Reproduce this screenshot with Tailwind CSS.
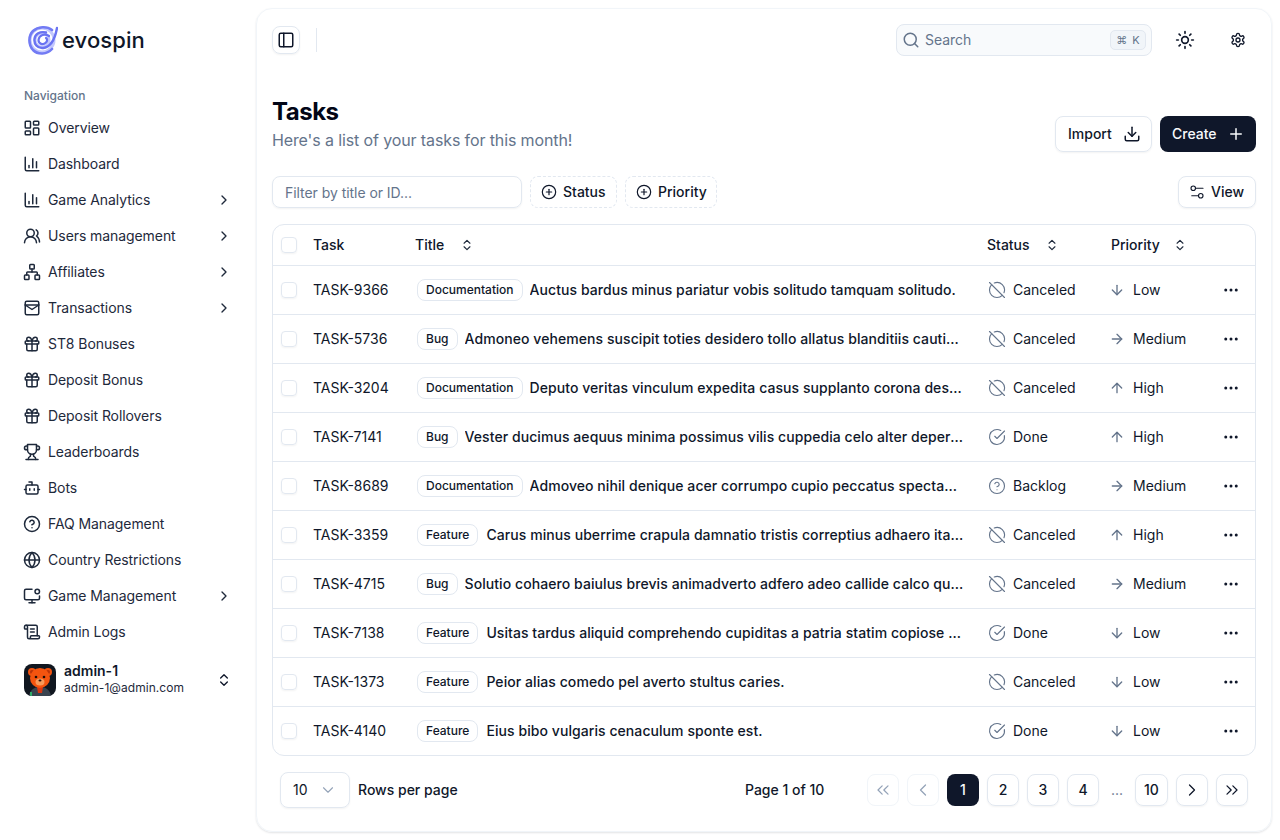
<!DOCTYPE html>
<html lang="en">
<head>
<meta charset="utf-8">
<title>Tasks</title>
<script src="https://cdn.jsdelivr.net/npm/@tailwindcss/browser@4"></script>
</head>
<body class="bg-white text-[#0f172a] font-['Inter','Liberation_Sans',sans-serif] antialiased">
<svg class="hidden" xmlns="http://www.w3.org/2000/svg">
<symbol id="i-dash" viewBox="0 0 24 24"><rect x="3" y="3" width="7" height="9" rx="1"/><rect x="14" y="3" width="7" height="5" rx="1"/><rect x="14" y="12" width="7" height="9" rx="1"/><rect x="3" y="16" width="7" height="5" rx="1"/></symbol>
<symbol id="i-chart" viewBox="0 0 24 24"><path d="M3 3v16a2 2 0 0 0 2 2h16"/><path d="M18 17V9"/><path d="M13 17V5"/><path d="M8 17v-3"/></symbol>
<symbol id="i-users" viewBox="0 0 24 24"><path d="M18 21a8 8 0 0 0-16 0"/><circle cx="10" cy="8" r="5"/><path d="M22 20c0-3.37-2-6.5-4-8a5 5 0 0 0-.45-8.3"/></symbol>
<symbol id="i-net" viewBox="0 0 24 24"><rect x="16" y="16" width="6" height="6" rx="1"/><rect x="2" y="16" width="6" height="6" rx="1"/><rect x="9" y="2" width="6" height="6" rx="1"/><path d="M5 16v-3a1 1 0 0 1 1-1h12a1 1 0 0 1 1 1v3"/><path d="M12 12V8"/></symbol>
<symbol id="i-box" viewBox="0 0 24 24"><rect x="3" y="3" width="18" height="18" rx="2"/><path d="M3 8h18"/><path d="M3 8l9 6 9-6"/></symbol>
<symbol id="i-gift" viewBox="0 0 24 24"><rect x="3" y="8" width="18" height="4" rx="1"/><path d="M12 8v13"/><path d="M19 12v7a2 2 0 0 1-2 2H7a2 2 0 0 1-2-2v-7"/><path d="M7.5 8a2.5 2.5 0 0 1 0-5A4.8 8 0 0 1 12 8a4.8 8 0 0 1 4.5-5 2.5 2.5 0 0 1 0 5"/></symbol>
<symbol id="i-trophy" viewBox="0 0 24 24"><path d="M6 9H4.5a2.5 2.5 0 0 1 0-5H6"/><path d="M18 9h1.5a2.5 2.5 0 0 0 0-5H18"/><path d="M4 22h16"/><path d="M10 14.66V17c0 .55-.47.98-.97 1.21C7.85 18.75 7 20.24 7 22"/><path d="M14 14.66V17c0 .55.47.98.97 1.21C16.15 18.75 17 20.24 17 22"/><path d="M18 2H6v7a6 6 0 0 0 12 0V2Z"/></symbol>
<symbol id="i-bot" viewBox="0 0 24 24"><path d="M12 8V4H8"/><rect x="4" y="8" width="16" height="12" rx="2"/><path d="M2 14h2"/><path d="M20 14h2"/><path d="M15 13v2"/><path d="M9 13v2"/></symbol>
<symbol id="i-help" viewBox="0 0 24 24"><circle cx="12" cy="12" r="10"/><path d="M9.09 9a3 3 0 0 1 5.83 1c0 2-3 3-3 3"/><path d="M12 17h.01"/></symbol>
<symbol id="i-globe" viewBox="0 0 24 24"><circle cx="12" cy="12" r="10"/><path d="M12 2a14.5 14.5 0 0 0 0 20 14.5 14.5 0 0 0 0-20"/><path d="M2 12h20"/></symbol>
<symbol id="i-monitor" viewBox="0 0 24 24"><path d="M12 3H4a2 2 0 0 0-2 2v10a2 2 0 0 0 2 2h16a2 2 0 0 0 2-2v-3"/><path d="M8 21h8"/><path d="M12 17v4"/><circle cx="19" cy="6" r="3"/></symbol>
<symbol id="i-scroll" viewBox="0 0 24 24"><path d="M15 12h-5"/><path d="M15 8h-5"/><path d="M19 17V5a2 2 0 0 0-2-2H4"/><path d="M8 21h12a2 2 0 0 0 2-2v-1a1 1 0 0 0-1-1H11a1 1 0 0 0-1 1v1a2 2 0 1 1-4 0V5a2 2 0 1 0-4 0v2a1 1 0 0 0 1 1h3"/></symbol>
<symbol id="i-updown" viewBox="0 0 24 24"><path d="m7 15 5 5 5-5"/><path d="m7 9 5-5 5 5"/></symbol>
<symbol id="i-panel" viewBox="0 0 24 24"><rect x="3" y="3" width="18" height="18" rx="2"/><path d="M9 3v18"/></symbol>
<symbol id="i-search" viewBox="0 0 24 24"><path d="m21 21-4.3-4.3"/><circle cx="11" cy="11" r="8"/></symbol>
<symbol id="i-sun" viewBox="0 0 24 24"><circle cx="12" cy="12" r="4"/><path d="M12 2v2"/><path d="M12 20v2"/><path d="m4.93 4.93 1.41 1.41"/><path d="m17.66 17.66 1.41 1.41"/><path d="M2 12h2"/><path d="M20 12h2"/><path d="m6.34 17.66-1.41 1.41"/><path d="m19.07 4.93-1.41 1.41"/></symbol>
<symbol id="i-gear" viewBox="0 0 24 24"><path d="M12.22 2h-.44a2 2 0 0 0-2 2v.18a2 2 0 0 1-1 1.73l-.43.25a2 2 0 0 1-2 0l-.15-.08a2 2 0 0 0-2.73.73l-.22.38a2 2 0 0 0 .73 2.73l.15.1a2 2 0 0 1 1 1.72v.51a2 2 0 0 1-1 1.74l-.15.09a2 2 0 0 0-.73 2.73l.22.38a2 2 0 0 0 2.73.73l.15-.08a2 2 0 0 1 2 0l.43.25a2 2 0 0 1 1 1.73V20a2 2 0 0 0 2 2h.44a2 2 0 0 0 2-2v-.18a2 2 0 0 1 1-1.73l.43-.25a2 2 0 0 1 2 0l.15.08a2 2 0 0 0 2.73-.73l.22-.39a2 2 0 0 0-.73-2.73l-.15-.08a2 2 0 0 1-1-1.74v-.5a2 2 0 0 1 1-1.74l.15-.09a2 2 0 0 0 .73-2.73l-.22-.38a2 2 0 0 0-2.73-.73l-.15.08a2 2 0 0 1-2 0l-.43-.25a2 2 0 0 1-1-1.73V4a2 2 0 0 0-2-2z"/><circle cx="12" cy="12" r="3"/></symbol>
<symbol id="i-import" viewBox="0 0 24 24"><path d="M12 15V3"/><path d="M21 15v4a2 2 0 0 1-2 2H5a2 2 0 0 1-2-2v-4"/><path d="m7 10 5 5 5-5"/></symbol>
<symbol id="i-plus" viewBox="0 0 24 24"><path d="M5 12h14"/><path d="M12 5v14"/></symbol>
<symbol id="i-sliders" viewBox="0 0 24 24"><path d="M20 7h-9"/><path d="M14 17H5"/><circle cx="17" cy="17" r="3"/><circle cx="7" cy="7" r="3"/></symbol>
<symbol id="i-cplus" viewBox="0 0 24 24"><circle cx="12" cy="12" r="10"/><path d="M8 12h8"/><path d="M12 8v8"/></symbol>
<symbol id="i-off" viewBox="0 0 24 24"><path d="m2 2 20 20"/><path d="M8.35 2.69A10 10 0 0 1 21.3 15.65"/><path d="M19.08 19.08A10 10 0 1 1 4.92 4.92"/></symbol>
<symbol id="i-check" viewBox="0 0 24 24"><path d="M21.801 10A10 10 0 1 1 17 3.335"/><path d="m9 11 3 3L22 4"/></symbol>
<symbol id="i-down" viewBox="0 0 24 24"><path d="M12 5v14"/><path d="m19 12-7 7-7-7"/></symbol>
<symbol id="i-up" viewBox="0 0 24 24"><path d="m5 12 7-7 7 7"/><path d="M12 19V5"/></symbol>
<symbol id="i-right" viewBox="0 0 24 24"><path d="M5 12h14"/><path d="m12 5 7 7-7 7"/></symbol>
<symbol id="i-dots" viewBox="0 0 24 24"><circle cx="12" cy="12" r="1"/><circle cx="19" cy="12" r="1"/><circle cx="5" cy="12" r="1"/></symbol>
<symbol id="i-cr" viewBox="0 0 24 24"><path d="m9 18 6-6-6-6"/></symbol>
<symbol id="i-cl" viewBox="0 0 24 24"><path d="m15 18-6-6 6-6"/></symbol>
<symbol id="i-cd" viewBox="0 0 24 24"><path d="m6 9 6 6 6-6"/></symbol>
<symbol id="i-cll" viewBox="0 0 24 24"><path d="m11 17-5-5 5-5"/><path d="m18 17-5-5 5-5"/></symbol>
<symbol id="i-crr" viewBox="0 0 24 24"><path d="m6 17 5-5-5-5"/><path d="m13 17 5-5-5-5"/></symbol>
</svg>

<div class="flex h-[840px] w-[1280px] overflow-hidden">
  <!-- Sidebar -->
  <aside class="w-64 shrink-0 flex flex-col">
    <div class="h-[80px] pl-7 flex items-center gap-1">
      <svg class="w-[30px] h-[30px]" viewBox="0 0 30 30" fill="none" stroke-linecap="round">
        <circle cx="14" cy="15" r="12" stroke="#c3c8fd" stroke-width="3"/>
        <circle cx="14" cy="15" r="7" stroke="#c3c8fd" stroke-width="3"/>
        <path d="M24 5C19 1 10 1.500 5 6 0 11 .500 20 5 25 10 30 19 29.500 24 24" stroke="#727bf4" stroke-width="2.600"/>
        <path d="M29 3C27 14 23 22 15 23 9 23.500 6 19 6.500 14 7 9 12 6 18 7.500" stroke="#6a73f2" stroke-width="2.400"/>
        <path d="M21 11C17 8 11 10 10.500 15 10.500 19 15 20.500 18 17.500 19.500 16 19.500 14 18 13" stroke="#6a73f2" stroke-width="2.200"/>
      </svg>
      <span class="text-[22px] leading-none font-medium tracking-[0.1px] text-[#0f1729] -mt-px">evospin</span>
    </div>
    <div class="pl-6 pr-6 mt-2 h-4 flex items-center text-xs font-medium text-[#64748b]">Navigation</div>
    <nav class="mt-[6px] flex flex-col text-sm tracking-[-0.08px] text-[#1e293b]">
      <a class="h-9 pl-6 pr-6 flex items-center gap-[7px]"><svg class="-ml-px size-[18px] shrink-0 fill-none stroke-current stroke-2 [stroke-linecap:round] [stroke-linejoin:round]"><use href="#i-dash"/></svg><span class="flex-1">Overview</span></a>
      <a class="h-9 pl-6 pr-6 flex items-center gap-[7px]"><svg class="-ml-px size-[18px] shrink-0 fill-none stroke-current stroke-2 [stroke-linecap:round] [stroke-linejoin:round]"><use href="#i-chart"/></svg><span class="flex-1">Dashboard</span></a>
      <a class="h-9 pl-6 pr-6 flex items-center gap-[7px]"><svg class="-ml-px size-[18px] shrink-0 fill-none stroke-current stroke-2 [stroke-linecap:round] [stroke-linejoin:round]"><use href="#i-chart"/></svg><span class="flex-1">Game Analytics</span><svg class="size-4 shrink-0 fill-none stroke-current stroke-2 [stroke-linecap:round] [stroke-linejoin:round]"><use href="#i-cr"/></svg></a>
      <a class="h-9 pl-6 pr-6 flex items-center gap-[7px]"><svg class="-ml-px size-[18px] shrink-0 fill-none stroke-current stroke-2 [stroke-linecap:round] [stroke-linejoin:round]"><use href="#i-users"/></svg><span class="flex-1">Users management</span><svg class="size-4 shrink-0 fill-none stroke-current stroke-2 [stroke-linecap:round] [stroke-linejoin:round]"><use href="#i-cr"/></svg></a>
      <a class="h-9 pl-6 pr-6 flex items-center gap-[7px]"><svg class="-ml-px size-[18px] shrink-0 fill-none stroke-current stroke-2 [stroke-linecap:round] [stroke-linejoin:round]"><use href="#i-net"/></svg><span class="flex-1">Affiliates</span><svg class="size-4 shrink-0 fill-none stroke-current stroke-2 [stroke-linecap:round] [stroke-linejoin:round]"><use href="#i-cr"/></svg></a>
      <a class="h-9 pl-6 pr-6 flex items-center gap-[7px]"><svg class="-ml-px size-[18px] shrink-0 fill-none stroke-current stroke-2 [stroke-linecap:round] [stroke-linejoin:round]"><use href="#i-box"/></svg><span class="flex-1">Transactions</span><svg class="size-4 shrink-0 fill-none stroke-current stroke-2 [stroke-linecap:round] [stroke-linejoin:round]"><use href="#i-cr"/></svg></a>
      <a class="h-9 pl-6 pr-6 flex items-center gap-[7px]"><svg class="-ml-px size-[18px] shrink-0 fill-none stroke-current stroke-2 [stroke-linecap:round] [stroke-linejoin:round]"><use href="#i-gift"/></svg><span class="flex-1">ST8 Bonuses</span></a>
      <a class="h-9 pl-6 pr-6 flex items-center gap-[7px]"><svg class="-ml-px size-[18px] shrink-0 fill-none stroke-current stroke-2 [stroke-linecap:round] [stroke-linejoin:round]"><use href="#i-gift"/></svg><span class="flex-1">Deposit Bonus</span></a>
      <a class="h-9 pl-6 pr-6 flex items-center gap-[7px]"><svg class="-ml-px size-[18px] shrink-0 fill-none stroke-current stroke-2 [stroke-linecap:round] [stroke-linejoin:round]"><use href="#i-gift"/></svg><span class="flex-1">Deposit Rollovers</span></a>
      <a class="h-9 pl-6 pr-6 flex items-center gap-[7px]"><svg class="-ml-px size-[18px] shrink-0 fill-none stroke-current stroke-2 [stroke-linecap:round] [stroke-linejoin:round]"><use href="#i-trophy"/></svg><span class="flex-1">Leaderboards</span></a>
      <a class="h-9 pl-6 pr-6 flex items-center gap-[7px]"><svg class="-ml-px size-[18px] shrink-0 fill-none stroke-current stroke-2 [stroke-linecap:round] [stroke-linejoin:round]"><use href="#i-bot"/></svg><span class="flex-1">Bots</span></a>
      <a class="h-9 pl-6 pr-6 flex items-center gap-[7px]"><svg class="-ml-px size-[18px] shrink-0 fill-none stroke-current stroke-2 [stroke-linecap:round] [stroke-linejoin:round]"><use href="#i-help"/></svg><span class="flex-1">FAQ Management</span></a>
      <a class="h-9 pl-6 pr-6 flex items-center gap-[7px]"><svg class="-ml-px size-[18px] shrink-0 fill-none stroke-current stroke-2 [stroke-linecap:round] [stroke-linejoin:round]"><use href="#i-globe"/></svg><span class="flex-1">Country Restrictions</span></a>
      <a class="h-9 pl-6 pr-6 flex items-center gap-[7px]"><svg class="-ml-px size-[18px] shrink-0 fill-none stroke-current stroke-2 [stroke-linecap:round] [stroke-linejoin:round]"><use href="#i-monitor"/></svg><span class="flex-1">Game Management</span><svg class="size-4 shrink-0 fill-none stroke-current stroke-2 [stroke-linecap:round] [stroke-linejoin:round]"><use href="#i-cr"/></svg></a>
      <a class="h-9 pl-6 pr-6 flex items-center gap-[7px]"><svg class="-ml-px size-[18px] shrink-0 fill-none stroke-current stroke-2 [stroke-linecap:round] [stroke-linejoin:round]"><use href="#i-scroll"/></svg><span class="flex-1">Admin Logs</span></a>
    </nav>
    <div class="mt-[14px] pl-6 pr-6 flex items-center gap-2">
      <svg class="size-8 shrink-0 rounded-lg" viewBox="0 0 32 32">
        <rect width="32" height="32" fill="#10161f"/>
        <path d="M5 32c1-6 5-9 11-9s10 3 11 9z" fill="#3a4450"/>
        <path d="M13 23h6l-1 6h-4z" fill="#d9360f"/>
        <circle cx="8" cy="8" r="4" fill="#f0520f"/><circle cx="24" cy="8" r="4" fill="#f0520f"/>
        <circle cx="8" cy="8" r="2" fill="#b83208"/><circle cx="24" cy="8" r="2" fill="#b83208"/>
        <ellipse cx="16" cy="14" rx="10" ry="10" fill="#f4540f"/>
        <ellipse cx="16" cy="18" rx="4.500" ry="3.500" fill="#f79a5a"/>
        <circle cx="12" cy="13" r="1.300" fill="#1a0d08"/><circle cx="20" cy="13" r="1.300" fill="#1a0d08"/>
        <ellipse cx="16" cy="16.500" rx="1.500" ry="1.100" fill="#2a120a"/>
        <rect x="6" y="28" width="2" height="4" fill="#2fae6a"/>
      </svg>
      <div class="flex-1 min-w-0 flex flex-col -mt-[2px]">
        <span class="text-sm leading-[18px] font-semibold">admin-1</span>
        <span class="text-xs leading-[16px] tracking-[0.05px] text-[#1e293b]">admin-1@admin.com</span>
      </div>
      <svg class="size-4 shrink-0 fill-none stroke-current stroke-2 [stroke-linecap:round] [stroke-linejoin:round]"><use href="#i-updown"/></svg>
    </div>
  </aside>

  <!-- Main card -->
  <main class="mt-2 mb-2 mr-2 w-[1016px] rounded-2xl border border-[#f1f5f9] shadow-[0_1px_2px_rgba(15,23,42,0.12)] px-4 flex flex-col">
    <header class="h-[62px] -mx-px flex items-center">
      <button class="size-7 rounded-lg border border-[#e2e8f0] shadow-xs flex items-center justify-center"><svg class="size-[18px] shrink-0 fill-none stroke-current stroke-2 [stroke-linecap:round] [stroke-linejoin:round]"><use href="#i-panel"/></svg></button>
      <div class="ml-4 w-px h-6 bg-[#e2e8f0]"></div>
      <div class="ml-auto w-64 h-8 rounded-lg border border-[#e2e8f0] bg-[#f8fafc] flex items-center pl-[5px] pr-[5px] gap-[5px]">
        <svg class="size-[18px] shrink-0 text-[#64748b] fill-none stroke-current stroke-2 [stroke-linecap:round] [stroke-linejoin:round]"><use href="#i-search"/></svg>
        <span class="flex-1 text-sm tracking-[-0.05px] text-[#64748b]">Search</span>
        <span class="h-5 w-9 rounded-[5px] border border-[#e2e8f0] bg-[#f1f5f9] text-[11px] text-[#64748b] flex items-center justify-center gap-[5px]"><span>⌘</span><span>K</span></span>
      </div>
      <div class="ml-[25px] size-4 flex items-center justify-center"><svg class="size-5 shrink-0 fill-none stroke-current stroke-2 [stroke-linecap:round] [stroke-linejoin:round]"><use href="#i-sun"/></svg></div>
      <div class="ml-[37px] mr-[10px] size-4 flex items-center justify-center"><svg class="size-4 shrink-0 fill-none stroke-current stroke-2 [stroke-linecap:round] [stroke-linejoin:round]"><use href="#i-gear"/></svg></div>
    </header>

    <section class="mt-[25px] flex items-end justify-between -mx-px">
      <div>
        <h1 class="text-2xl leading-8 font-bold tracking-[-0.5px] text-[#020617]">Tasks</h1>
        <p class="text-base leading-6 tracking-[-0.12px] text-[#64748b]">Here's a list of your tasks for this month!</p>
      </div>
      <div class="flex gap-2">
        <button class="h-9 w-[97px] pl-3 rounded-lg border border-[#e2e8f0] shadow-xs text-sm font-medium flex items-center gap-[11px]">Import<svg class="size-[18px] shrink-0 fill-none stroke-current stroke-2 [stroke-linecap:round] [stroke-linejoin:round]"><use href="#i-import"/></svg></button>
        <button class="h-9 w-24 pl-3 rounded-lg bg-[#0f172a] text-[#f8fafc] text-sm font-medium flex items-center gap-[10px]">Create<svg class="size-[18px] shrink-0 fill-none stroke-current stroke-2 [stroke-linecap:round] [stroke-linejoin:round]"><use href="#i-plus"/></svg></button>
      </div>
    </section>

    <section class="mt-6 flex items-center gap-2 -mx-px">
      <div class="w-[250px] h-8 pt-px rounded-lg border border-[#e2e8f0] shadow-xs px-3 flex items-center text-sm tracking-[-0.05px] text-[#64748b]">Filter by title or ID...</div>
      <button class="h-8 w-[87px] pl-[10px] rounded-lg border border-dashed border-[#e2e8f0] text-sm font-medium flex items-center gap-[6px]"><svg class="size-4 shrink-0 fill-none stroke-current stroke-[1.8] [stroke-linecap:round] [stroke-linejoin:round]"><use href="#i-cplus"/></svg>Status</button>
      <button class="h-8 w-[92px] pl-[10px] rounded-lg border border-dashed border-[#e2e8f0] text-sm font-medium flex items-center gap-[6px]"><svg class="size-4 shrink-0 fill-none stroke-current stroke-[1.8] [stroke-linecap:round] [stroke-linejoin:round]"><use href="#i-cplus"/></svg>Priority</button>
      <button class="ml-auto h-8 w-[78px] pl-[9px] rounded-lg border border-[#e2e8f0] shadow-xs text-sm font-medium flex items-center gap-[5px]"><svg class="size-[18px] shrink-0 fill-none stroke-current stroke-[1.5] [stroke-linecap:round] [stroke-linejoin:round]"><use href="#i-sliders"/></svg>View</button>
    </section>

    <section class="mt-4 -mx-px rounded-xl border border-[#e2e8f0] text-sm">
      <div class="h-[41px] flex items-center border-b border-[#e2e8f0] font-medium">
        <div class="w-10 pl-2 shrink-0"><span class="block size-4 rounded-[4px] border border-[#e2e8f0] shadow-xs"></span></div>
        <div class="w-[102px] shrink-0">Task</div>
        <div class="w-[572px] shrink-0 flex items-center gap-4">Title<svg class="size-[14px] text-[#1e293b] fill-none stroke-current stroke-2 [stroke-linecap:round] [stroke-linejoin:round]"><use href="#i-updown"/></svg></div>
        <div class="w-[124px] shrink-0 flex items-center gap-[15px]">Status<svg class="size-[14px] text-[#1e293b] fill-none stroke-current stroke-2 [stroke-linecap:round] [stroke-linejoin:round]"><use href="#i-updown"/></svg></div>
        <div class="shrink-0 flex items-center gap-[13px]">Priority<svg class="size-[14px] text-[#1e293b] fill-none stroke-current stroke-2 [stroke-linecap:round] [stroke-linejoin:round]"><use href="#i-updown"/></svg></div>
      </div>

      <div class="h-[49px] flex items-center border-b border-[#e2e8f0]">
        <div class="w-10 pl-2 shrink-0"><span class="block size-4 rounded-[4px] border border-[#e2e8f0] shadow-xs"></span></div>
        <div class="w-[102px] shrink-0">TASK-9366</div>
        <div class="w-[572px] shrink-0 pl-[2px] pr-[22px] flex items-center gap-[7px]"><span class="shrink-0 h-[22px] px-2 rounded-lg border border-[#e2e8f0] text-xs font-medium flex items-center">Documentation</span><span class="font-medium tracking-[0.07px] truncate">Auctus bardus minus pariatur vobis solitudo tamquam solitudo.</span></div>
        <div class="w-[124px] shrink-0 pl-px flex items-center gap-[7px]"><svg class="size-[18px] shrink-0 text-[#64748b] fill-none stroke-current stroke-[1.5] [stroke-linecap:round] [stroke-linejoin:round]"><use href="#i-off"/></svg>Canceled</div>
        <div class="w-[111px] shrink-0 flex items-center gap-2"><svg class="-ml-[2px] size-4 shrink-0 text-[#64748b] fill-none stroke-current stroke-2 [stroke-linecap:round] [stroke-linejoin:round]"><use href="#i-down"/></svg>Low</div>
        <svg class="size-[18px] shrink-0 fill-none stroke-current stroke-2 [stroke-linecap:round] [stroke-linejoin:round]"><use href="#i-dots"/></svg>
      </div>
      <div class="h-[49px] flex items-center border-b border-[#e2e8f0]">
        <div class="w-10 pl-2 shrink-0"><span class="block size-4 rounded-[4px] border border-[#e2e8f0] shadow-xs"></span></div>
        <div class="w-[102px] shrink-0">TASK-5736</div>
        <div class="w-[572px] shrink-0 pl-[2px] pr-[22px] flex items-center gap-[7px]"><span class="shrink-0 h-[22px] px-2 rounded-lg border border-[#e2e8f0] text-xs font-medium flex items-center">Bug</span><span class="font-medium tracking-[0.07px] truncate">Admoneo vehemens suscipit toties desidero tollo allatus blanditiis cautio vorago.</span></div>
        <div class="w-[124px] shrink-0 pl-px flex items-center gap-[7px]"><svg class="size-[18px] shrink-0 text-[#64748b] fill-none stroke-current stroke-[1.5] [stroke-linecap:round] [stroke-linejoin:round]"><use href="#i-off"/></svg>Canceled</div>
        <div class="w-[111px] shrink-0 flex items-center gap-2"><svg class="-ml-[2px] size-4 shrink-0 text-[#64748b] fill-none stroke-current stroke-2 [stroke-linecap:round] [stroke-linejoin:round]"><use href="#i-right"/></svg>Medium</div>
        <svg class="size-[18px] shrink-0 fill-none stroke-current stroke-2 [stroke-linecap:round] [stroke-linejoin:round]"><use href="#i-dots"/></svg>
      </div>
      <div class="h-[49px] flex items-center border-b border-[#e2e8f0]">
        <div class="w-10 pl-2 shrink-0"><span class="block size-4 rounded-[4px] border border-[#e2e8f0] shadow-xs"></span></div>
        <div class="w-[102px] shrink-0">TASK-3204</div>
        <div class="w-[572px] shrink-0 pl-[2px] pr-[22px] flex items-center gap-[7px]"><span class="shrink-0 h-[22px] px-2 rounded-lg border border-[#e2e8f0] text-xs font-medium flex items-center">Documentation</span><span class="font-medium tracking-[0.07px] truncate">Deputo veritas vinculum expedita casus supplanto corona desino vigor.</span></div>
        <div class="w-[124px] shrink-0 pl-px flex items-center gap-[7px]"><svg class="size-[18px] shrink-0 text-[#64748b] fill-none stroke-current stroke-[1.5] [stroke-linecap:round] [stroke-linejoin:round]"><use href="#i-off"/></svg>Canceled</div>
        <div class="w-[111px] shrink-0 flex items-center gap-2"><svg class="-ml-[2px] size-4 shrink-0 text-[#64748b] fill-none stroke-current stroke-2 [stroke-linecap:round] [stroke-linejoin:round]"><use href="#i-up"/></svg>High</div>
        <svg class="size-[18px] shrink-0 fill-none stroke-current stroke-2 [stroke-linecap:round] [stroke-linejoin:round]"><use href="#i-dots"/></svg>
      </div>
      <div class="h-[49px] flex items-center border-b border-[#e2e8f0]">
        <div class="w-10 pl-2 shrink-0"><span class="block size-4 rounded-[4px] border border-[#e2e8f0] shadow-xs"></span></div>
        <div class="w-[102px] shrink-0">TASK-7141</div>
        <div class="w-[572px] shrink-0 pl-[2px] pr-[22px] flex items-center gap-[7px]"><span class="shrink-0 h-[22px] px-2 rounded-lg border border-[#e2e8f0] text-xs font-medium flex items-center">Bug</span><span class="font-medium tracking-[0.07px] truncate">Vester ducimus aequus minima possimus vilis cuppedia celo alter deperdo tenus.</span></div>
        <div class="w-[124px] shrink-0 pl-px flex items-center gap-[7px]"><svg class="size-[18px] shrink-0 text-[#64748b] fill-none stroke-current stroke-[1.5] [stroke-linecap:round] [stroke-linejoin:round]"><use href="#i-check"/></svg>Done</div>
        <div class="w-[111px] shrink-0 flex items-center gap-2"><svg class="-ml-[2px] size-4 shrink-0 text-[#64748b] fill-none stroke-current stroke-2 [stroke-linecap:round] [stroke-linejoin:round]"><use href="#i-up"/></svg>High</div>
        <svg class="size-[18px] shrink-0 fill-none stroke-current stroke-2 [stroke-linecap:round] [stroke-linejoin:round]"><use href="#i-dots"/></svg>
      </div>
      <div class="h-[49px] flex items-center border-b border-[#e2e8f0]">
        <div class="w-10 pl-2 shrink-0"><span class="block size-4 rounded-[4px] border border-[#e2e8f0] shadow-xs"></span></div>
        <div class="w-[102px] shrink-0">TASK-8689</div>
        <div class="w-[572px] shrink-0 pl-[2px] pr-[22px] flex items-center gap-[7px]"><span class="shrink-0 h-[22px] px-2 rounded-lg border border-[#e2e8f0] text-xs font-medium flex items-center">Documentation</span><span class="font-medium tracking-[0.07px] truncate">Admoveo nihil denique acer corrumpo cupio peccatus spectaculum sonitus.</span></div>
        <div class="w-[124px] shrink-0 pl-px flex items-center gap-[7px]"><svg class="size-[18px] shrink-0 text-[#64748b] fill-none stroke-current stroke-[1.5] [stroke-linecap:round] [stroke-linejoin:round]"><use href="#i-help"/></svg>Backlog</div>
        <div class="w-[111px] shrink-0 flex items-center gap-2"><svg class="-ml-[2px] size-4 shrink-0 text-[#64748b] fill-none stroke-current stroke-2 [stroke-linecap:round] [stroke-linejoin:round]"><use href="#i-right"/></svg>Medium</div>
        <svg class="size-[18px] shrink-0 fill-none stroke-current stroke-2 [stroke-linecap:round] [stroke-linejoin:round]"><use href="#i-dots"/></svg>
      </div>
      <div class="h-[49px] flex items-center border-b border-[#e2e8f0]">
        <div class="w-10 pl-2 shrink-0"><span class="block size-4 rounded-[4px] border border-[#e2e8f0] shadow-xs"></span></div>
        <div class="w-[102px] shrink-0">TASK-3359</div>
        <div class="w-[572px] shrink-0 pl-[2px] pr-[22px] flex items-center gap-2"><span class="shrink-0 h-[22px] px-2 rounded-lg border border-[#e2e8f0] text-xs font-medium flex items-center">Feature</span><span class="font-medium tracking-[0.07px] truncate">Carus minus uberrime crapula damnatio tristis correptius adhaero ita vereor.</span></div>
        <div class="w-[124px] shrink-0 pl-px flex items-center gap-[7px]"><svg class="size-[18px] shrink-0 text-[#64748b] fill-none stroke-current stroke-[1.5] [stroke-linecap:round] [stroke-linejoin:round]"><use href="#i-off"/></svg>Canceled</div>
        <div class="w-[111px] shrink-0 flex items-center gap-2"><svg class="-ml-[2px] size-4 shrink-0 text-[#64748b] fill-none stroke-current stroke-2 [stroke-linecap:round] [stroke-linejoin:round]"><use href="#i-up"/></svg>High</div>
        <svg class="size-[18px] shrink-0 fill-none stroke-current stroke-2 [stroke-linecap:round] [stroke-linejoin:round]"><use href="#i-dots"/></svg>
      </div>
      <div class="h-[49px] flex items-center border-b border-[#e2e8f0]">
        <div class="w-10 pl-2 shrink-0"><span class="block size-4 rounded-[4px] border border-[#e2e8f0] shadow-xs"></span></div>
        <div class="w-[102px] shrink-0">TASK-4715</div>
        <div class="w-[572px] shrink-0 pl-[2px] pr-[22px] flex items-center gap-[7px]"><span class="shrink-0 h-[22px] px-2 rounded-lg border border-[#e2e8f0] text-xs font-medium flex items-center">Bug</span><span class="font-medium tracking-[0.07px] truncate">Solutio cohaero baiulus brevis animadverto adfero adeo callide calco quia vestrum.</span></div>
        <div class="w-[124px] shrink-0 pl-px flex items-center gap-[7px]"><svg class="size-[18px] shrink-0 text-[#64748b] fill-none stroke-current stroke-[1.5] [stroke-linecap:round] [stroke-linejoin:round]"><use href="#i-off"/></svg>Canceled</div>
        <div class="w-[111px] shrink-0 flex items-center gap-2"><svg class="-ml-[2px] size-4 shrink-0 text-[#64748b] fill-none stroke-current stroke-2 [stroke-linecap:round] [stroke-linejoin:round]"><use href="#i-right"/></svg>Medium</div>
        <svg class="size-[18px] shrink-0 fill-none stroke-current stroke-2 [stroke-linecap:round] [stroke-linejoin:round]"><use href="#i-dots"/></svg>
      </div>
      <div class="h-[49px] flex items-center border-b border-[#e2e8f0]">
        <div class="w-10 pl-2 shrink-0"><span class="block size-4 rounded-[4px] border border-[#e2e8f0] shadow-xs"></span></div>
        <div class="w-[102px] shrink-0">TASK-7138</div>
        <div class="w-[572px] shrink-0 pl-[2px] pr-[22px] flex items-center gap-2"><span class="shrink-0 h-[22px] px-2 rounded-lg border border-[#e2e8f0] text-xs font-medium flex items-center">Feature</span><span class="font-medium tracking-[0.07px] truncate">Usitas tardus aliquid comprehendo cupiditas a patria statim copiose vinculum.</span></div>
        <div class="w-[124px] shrink-0 pl-px flex items-center gap-[7px]"><svg class="size-[18px] shrink-0 text-[#64748b] fill-none stroke-current stroke-[1.5] [stroke-linecap:round] [stroke-linejoin:round]"><use href="#i-check"/></svg>Done</div>
        <div class="w-[111px] shrink-0 flex items-center gap-2"><svg class="-ml-[2px] size-4 shrink-0 text-[#64748b] fill-none stroke-current stroke-2 [stroke-linecap:round] [stroke-linejoin:round]"><use href="#i-down"/></svg>Low</div>
        <svg class="size-[18px] shrink-0 fill-none stroke-current stroke-2 [stroke-linecap:round] [stroke-linejoin:round]"><use href="#i-dots"/></svg>
      </div>
      <div class="h-[49px] flex items-center border-b border-[#e2e8f0]">
        <div class="w-10 pl-2 shrink-0"><span class="block size-4 rounded-[4px] border border-[#e2e8f0] shadow-xs"></span></div>
        <div class="w-[102px] shrink-0">TASK-1373</div>
        <div class="w-[572px] shrink-0 pl-[2px] pr-[22px] flex items-center gap-2"><span class="shrink-0 h-[22px] px-2 rounded-lg border border-[#e2e8f0] text-xs font-medium flex items-center">Feature</span><span class="font-medium tracking-[0.07px] truncate">Peior alias comedo pel averto stultus caries.</span></div>
        <div class="w-[124px] shrink-0 pl-px flex items-center gap-[7px]"><svg class="size-[18px] shrink-0 text-[#64748b] fill-none stroke-current stroke-[1.5] [stroke-linecap:round] [stroke-linejoin:round]"><use href="#i-off"/></svg>Canceled</div>
        <div class="w-[111px] shrink-0 flex items-center gap-2"><svg class="-ml-[2px] size-4 shrink-0 text-[#64748b] fill-none stroke-current stroke-2 [stroke-linecap:round] [stroke-linejoin:round]"><use href="#i-down"/></svg>Low</div>
        <svg class="size-[18px] shrink-0 fill-none stroke-current stroke-2 [stroke-linecap:round] [stroke-linejoin:round]"><use href="#i-dots"/></svg>
      </div>
      <div class="h-[48px] flex items-center">
        <div class="w-10 pl-2 shrink-0"><span class="block size-4 rounded-[4px] border border-[#e2e8f0] shadow-xs"></span></div>
        <div class="w-[102px] shrink-0">TASK-4140</div>
        <div class="w-[572px] shrink-0 pl-[2px] pr-[22px] flex items-center gap-2"><span class="shrink-0 h-[22px] px-2 rounded-lg border border-[#e2e8f0] text-xs font-medium flex items-center">Feature</span><span class="font-medium tracking-[0.07px] truncate">Eius bibo vulgaris cenaculum sponte est.</span></div>
        <div class="w-[124px] shrink-0 pl-px flex items-center gap-[7px]"><svg class="size-[18px] shrink-0 text-[#64748b] fill-none stroke-current stroke-[1.5] [stroke-linecap:round] [stroke-linejoin:round]"><use href="#i-check"/></svg>Done</div>
        <div class="w-[111px] shrink-0 flex items-center gap-2"><svg class="-ml-[2px] size-4 shrink-0 text-[#64748b] fill-none stroke-current stroke-2 [stroke-linecap:round] [stroke-linejoin:round]"><use href="#i-down"/></svg>Low</div>
        <svg class="size-[18px] shrink-0 fill-none stroke-current stroke-2 [stroke-linecap:round] [stroke-linejoin:round]"><use href="#i-dots"/></svg>
      </div>
    </section>

    <footer class="mt-4 -mx-px px-2 flex items-center text-sm font-medium">
      <div class="w-[70px] h-9 shrink-0 rounded-lg border border-[#e2e8f0] shadow-xs pl-3 pr-3 flex items-center justify-between font-normal">10<svg class="size-[18px] shrink-0 text-[#94a3b8] fill-none stroke-current stroke-[1.5] [stroke-linecap:round] [stroke-linejoin:round]"><use href="#i-cd"/></svg></div>
      <span class="ml-2 shrink-0 whitespace-nowrap">Rows per page</span>
      <span class="ml-auto w-[122px] shrink-0 whitespace-nowrap">Page 1 of 10</span>
      <div class="flex items-center gap-2">
        <button class="size-8 rounded-lg border border-[#f1f5f9] text-[#94a3b8] flex items-center justify-center"><svg class="size-5 shrink-0 fill-none stroke-current stroke-[1.5] [stroke-linecap:round] [stroke-linejoin:round]"><use href="#i-cll"/></svg></button>
        <button class="size-8 rounded-lg border border-[#f1f5f9] text-[#94a3b8] flex items-center justify-center"><svg class="size-5 shrink-0 fill-none stroke-current stroke-[1.5] [stroke-linecap:round] [stroke-linejoin:round]"><use href="#i-cl"/></svg></button>
        <button class="size-8 rounded-lg bg-[#0f172a] text-[#f8fafc] flex items-center justify-center">1</button>
        <button class="size-8 rounded-lg border border-[#e2e8f0] shadow-xs flex items-center justify-center">2</button>
        <button class="size-8 rounded-lg border border-[#e2e8f0] shadow-xs flex items-center justify-center">3</button>
        <button class="size-8 rounded-lg border border-[#e2e8f0] shadow-xs flex items-center justify-center">4</button>
        <span class="w-5 text-center text-[#64748b] font-normal">...</span>
        <button class="w-[33px] h-8 rounded-lg border border-[#e2e8f0] shadow-xs flex items-center justify-center">10</button>
        <button class="size-8 rounded-lg border border-[#e2e8f0] shadow-xs flex items-center justify-center"><svg class="size-5 shrink-0 fill-none stroke-current stroke-[1.5] [stroke-linecap:round] [stroke-linejoin:round]"><use href="#i-cr"/></svg></button>
        <button class="size-8 rounded-lg border border-[#e2e8f0] shadow-xs flex items-center justify-center"><svg class="size-5 shrink-0 fill-none stroke-current stroke-[1.5] [stroke-linecap:round] [stroke-linejoin:round]"><use href="#i-crr"/></svg></button>
      </div>
    </footer>
  </main>
</div>
</body>
</html>
